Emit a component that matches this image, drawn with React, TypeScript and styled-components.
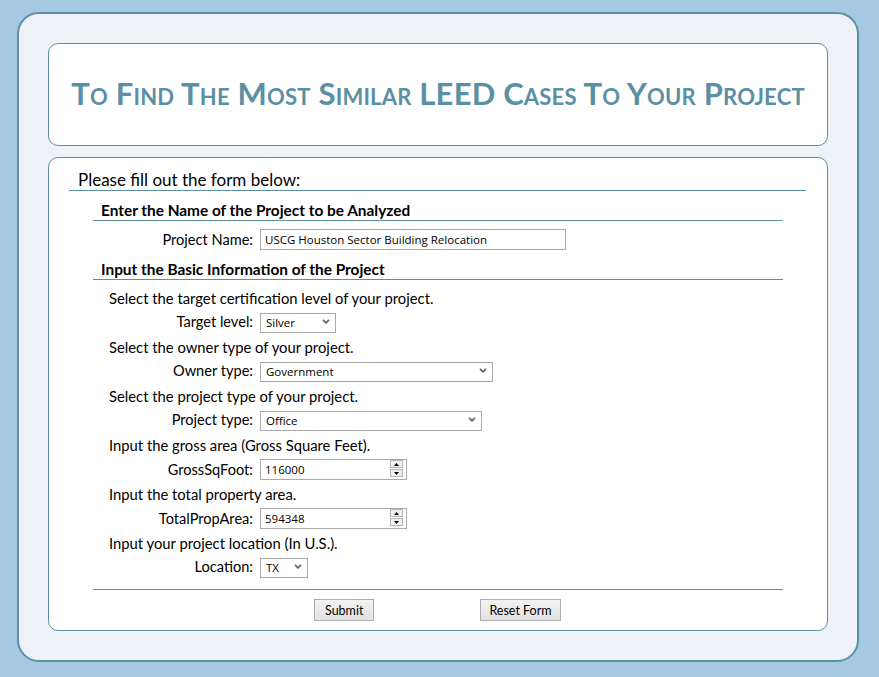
import React from 'react'
import styled, {createGlobalStyle} from "styled-components";

const COLORS = {
    page: '#a7c8e2',
    panel: '#eef1f5',
    teal: '#5b8fa3',
    field: '#a9a9a9',
    text: '#000000',
}

const GlobalStyle = createGlobalStyle`
  body {
    margin: 0;
    background: ${COLORS.page};
    font-family: 'Lato', 'Open Sans', sans-serif;
    color: ${COLORS.text};
  }
`

const Outer = styled.main`
  box-sizing: border-box;
  margin: 12px 0 0 17px;
  width: 842px;
  height: 650px;
  padding: 29px;
  display: flex;
  flex-direction: column;
  gap: 11px;
  background: ${COLORS.panel};
  border: 2px solid ${COLORS.teal};
  border-radius: 22px;
`

const Header = styled.header`
  box-sizing: border-box;
  height: 103px;
  display: flex;
  align-items: center;
  justify-content: center;
  background: #fff;
  border: 1px solid ${COLORS.teal};
  border-radius: 10px;
`

const Title = styled.h1`
  margin: 0 0 3px;
  font-family: 'Lato', 'Open Sans', sans-serif;
  font-size: 31px;
  font-weight: 700;
  font-variant: small-caps;
  color: ${COLORS.teal};
  letter-spacing: 0.2px;
`

const FormBox = styled.form`
  box-sizing: border-box;
  flex: 1;
  background: #fff;
  border: 1px solid ${COLORS.teal};
  border-radius: 10px;
  padding: 12px 21px 0 20px;
`

const Intro = styled.div`
  height: 20px;
  line-height: 20px;
  font-size: 17px;
  padding-left: 9px;
  border-bottom: 1px solid ${COLORS.teal};
`

const Section = styled.section`
  margin: 0 23px 0 24px;
`

const SectionTitle = styled.h2`
  margin: 10px 0 0;
  height: 19px;
  line-height: 19px;
  font-size: 15.4px;
  font-weight: 700;
  padding-left: 8px;
  border-bottom: 1px solid ${COLORS.teal};
`

const Hint = styled.div<{ $first?: boolean }>`
  height: 18px;
  line-height: 18px;
  font-size: 14.8px;
  padding-left: 16px;
  margin-top: ${p => p.$first ? 9 : 6}px;
`

const Row = styled.div<{ $top?: number }>`
  display: grid;
  grid-template-columns: 160px auto;
  column-gap: 7px;
  align-items: center;
  height: 21px;
  margin-top: ${p => p.$top ?? 4}px;
`

const Label = styled.label`
  text-align: right;
  font-size: 14.6px;
`

const TextInput = styled.input<{ $w: number }>`
  box-sizing: border-box;
  width: ${p => p.$w}px;
  height: 21px;
  border: 1px solid ${COLORS.field};
  padding: 0 4px;
  font-family: 'Open Sans', sans-serif;
  font-size: 11.5px;
  color: #000;
  outline: none;
`

const Field = styled.span`
  position: relative;
  display: inline-block;
  width: max-content;
`

const Select = styled.select<{ $w: number }>`
  box-sizing: border-box;
  appearance: none;
  width: ${p => p.$w}px;
  height: 20px;
  border: 1px solid ${COLORS.field};
  border-radius: 0;
  background: #fff;
  padding: 0 0 0 5px;
  font-family: 'Open Sans', sans-serif;
  font-size: 11.5px;
  color: #000;
  outline: none;
`

const Chevron = styled.svg`
  position: absolute;
  right: 6px;
  top: 8px;
  pointer-events: none;
`

const Spinner = styled.span`
  position: absolute;
  right: 4px;
  top: 2px;
  display: flex;
  flex-direction: column;
  gap: 1px;
`

const SpinBtn = styled.span`
  box-sizing: border-box;
  width: 13px;
  height: 8px;
  display: flex;
  align-items: center;
  justify-content: center;
  background: #f0f0f0;
  border: 1px solid #b5b5b5;
`

const Divider = styled.div`
  margin: 12px 23px 0 24px;
  border-top: 1px solid ${COLORS.teal};
`

const Buttons = styled.div`
  display: flex;
  gap: 106px;
  padding-left: 245px;
  margin-top: 9px;
`

const Button = styled.button<{ $pad?: number }>`
  box-sizing: border-box;
  height: 22px;
  padding: 0 ${p => p.$pad ?? 10}px;
  font-family: 'Lato', 'Open Sans', sans-serif;
  font-size: 12.5px;
  color: #000;
  background: linear-gradient(#f2f2f2, #e3e3e3);
  border: 1px solid #adadad;
  border-radius: 0;
`

const Arrow = () => (
    <Chevron width="8" height="5" viewBox="0 0 8 5">
        <path d="M1 0.8 L4 3.8 L7 0.8" fill="none" stroke="#666" strokeWidth="1.8"/>
    </Chevron>
)

const Dropdown = ({w, value, options}: { w: number, value: string, options: string[] }) => (
    <Field>
        <Select $w={w} defaultValue={value}>
            {options.map(o => <option key={o}>{o}</option>)}
        </Select>
        <Arrow/>
    </Field>
)

const NumberField = ({value}: { value: string }) => (
    <Field>
        <TextInput $w={147} defaultValue={value}/>
        <Spinner>
            <SpinBtn>
                <svg width="5" height="3" viewBox="0 0 5 3"><path d="M0 3 L2.5 0 L5 3Z" fill="#000"/></svg>
            </SpinBtn>
            <SpinBtn>
                <svg width="5" height="3" viewBox="0 0 5 3"><path d="M0 0 L2.5 3 L5 0Z" fill="#000"/></svg>
            </SpinBtn>
        </Spinner>
    </Field>
)

const App = () => {
    return (
        <>
            <GlobalStyle/>
            <Outer>
                <Header>
                    <Title>To Find The Most Similar LEED Cases To Your Project</Title>
                </Header>
                <FormBox onSubmit={e => e.preventDefault()}>
                    <Intro>Please fill out the form below:</Intro>
                    <Section>
                        <SectionTitle>Enter the Name of the Project to be Analyzed</SectionTitle>
                        <Row $top={8}>
                            <Label>Project Name:</Label>
                            <TextInput $w={306} defaultValue="USCG Houston Sector Building Relocation"/>
                        </Row>
                    </Section>
                    <Section>
                        <SectionTitle>Input the Basic Information of the Project</SectionTitle>
                        <Hint $first>Select the target certification level of your project.</Hint>
                        <Row>
                            <Label>Target level:</Label>
                            <Dropdown w={76} value="Silver" options={['Certified', 'Silver', 'Gold', 'Platinum']}/>
                        </Row>
                        <Hint>Select the owner type of your project.</Hint>
                        <Row>
                            <Label>Owner type:</Label>
                            <Dropdown w={233} value="Government" options={['Government', 'Private', 'Non-Profit']}/>
                        </Row>
                        <Hint>Select the project type of your project.</Hint>
                        <Row>
                            <Label>Project type:</Label>
                            <Dropdown w={222} value="Office" options={['Office', 'Retail', 'Education']}/>
                        </Row>
                        <Hint>Input the gross area (Gross Square Feet).</Hint>
                        <Row>
                            <Label>GrossSqFoot:</Label>
                            <NumberField value="116000"/>
                        </Row>
                        <Hint>Input the total property area.</Hint>
                        <Row>
                            <Label>TotalPropArea:</Label>
                            <NumberField value="594348"/>
                        </Row>
                        <Hint>Input your project location (In U.S.).</Hint>
                        <Row>
                            <Label>Location:</Label>
                            <Dropdown w={48} value="TX" options={['TX', 'CA', 'NY']}/>
                        </Row>
                    </Section>
                    <Divider/>
                    <Buttons>
                        <Button type="submit">Submit</Button>
                        <Button type="reset" $pad={8}>Reset Form</Button>
                    </Buttons>
                </FormBox>
            </Outer>
        </>
    )
}

export default App
